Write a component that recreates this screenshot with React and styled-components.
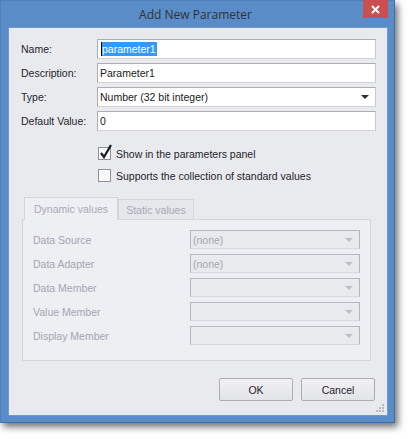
import React from "react";
import styled, { createGlobalStyle } from "styled-components";

const GlobalStyle = createGlobalStyle`
  html, body {
    margin: 0;
    padding: 0;
    background: #ffffff;
  }
  body {
    font-family: "Liberation Sans", Arial, sans-serif;
  }
`;

const Page = styled.div`
  width: 410px;
  height: 439px;
  overflow: hidden;
`;

const Window = styled.div`
  width: 395px;
  height: 423px;
  box-sizing: border-box;
  background: #5a8dc8;
  border: 1px solid #3f6ea6;
  border-left-color: #4f80bb;
  border-top-color: #4f80bb;
  display: flex;
  flex-direction: column;
  box-shadow: 3px 4px 7px rgba(0, 0, 0, 0.55);
`;

const TitleBar = styled.div`
  height: 26px;
  display: flex;
  align-items: center;
  justify-content: center;
  position: relative;
  color: #2e3238;
  font-family: "Open Sans", "Liberation Sans", sans-serif;
  font-size: 12px;
  padding-right: 4px;
`;

const CloseButton = styled.div`
  position: absolute;
  top: -1px;
  right: 6px;
  width: 25px;
  height: 18px;
  background: #c9504f;
  display: flex;
  align-items: center;
  justify-content: center;
`;

const Client = styled.div`
  flex: 1;
  margin: 0 6px 6px 7px;
  background: #e9eaee;
  border: 1px solid #6f9ad0;
  box-sizing: border-box;
  padding: 11px 11px 0 12px;
  display: flex;
  flex-direction: column;
  position: relative;
  font-size: 10.5px;
  color: #1f2228;
`;

const FormGrid = styled.div`
  display: grid;
  grid-template-columns: 76px 1fr;
  row-gap: 4px;
  align-items: center;
`;

const Label = styled.div`
  font-size: 10.5px;
  color: ${p => (p.disabled ? "#a3a5b4" : "#22252b")};
`;

const Field = styled.div`
  height: 20px;
  box-sizing: border-box;
  border: 1px solid #abadb3;
  border-bottom-color: #d0d2d8;
  border-right-color: #c6c8ce;
  background: #ffffff;
  display: flex;
  align-items: center;
  padding-left: 2px;
  padding-right: 6px;
  font-size: 10.5px;
  color: #1a1a1a;
`;

const Selected = styled.span`
  background: #3399ff;
  color: #ffffff;
  padding: 1px 1px 1px 0;
  border-left: 1px solid #000;
  margin-left: 1px;
`;

const FieldText = styled.span`
  flex: 1;
`;

const Arrow = styled.span`
  width: 0;
  height: 0;
  border-left: 4px solid transparent;
  border-right: 4px solid transparent;
  border-top: 4px solid ${p => (p.disabled ? "#bcbec6" : "#2c2f36")};
`;

const Checks = styled.div`
  display: flex;
  flex-direction: column;
  gap: 9px;
  margin: 16px 0 0 77px;
`;

const CheckRow = styled.label`
  display: flex;
  align-items: center;
  gap: 5px;
  font-size: 10.5px;
  color: #22252b;
`;

const Box = styled.span`
  width: 13px;
  height: 13px;
  box-sizing: border-box;
  border: 1px solid #8f9199;
  background: #fafafa;
  position: relative;
`;

const Tick = styled.svg`
  position: absolute;
  left: 0px;
  top: -4px;
`;

const TabGroup = styled.div`
  margin: 14px 5px 0 1px;
  display: flex;
  flex-direction: column;
`;

const TabStrip = styled.div`
  display: flex;
  align-items: flex-end;
  padding-left: 2px;
  height: 23px;
`;

const Tab = styled.div`
  height: ${p => (p.active ? "23px" : "20px")};
  box-sizing: border-box;
  padding: 0 ${p => (p.active ? "9px" : "7px")};
  border: 1px solid #d3d5db;
  border-bottom: none;
  background: ${p => (p.active ? "#eeeff2" : "#e6e7eb")};
  color: #a8aab8;
  font-size: 10.5px;
  display: flex;
  align-items: center;
  margin-bottom: ${p => (p.active ? "-1px" : "0")};
  position: relative;
  z-index: ${p => (p.active ? 1 : 0)};
`;

const Panel = styled.div`
  height: 142px;
  box-sizing: border-box;
  border: 1px solid #d3d5db;
  background: #eeeff2;
  padding: 10px 10px 0 10px;
  display: grid;
  grid-template-columns: 157px 1fr;
  row-gap: 5px;
  align-content: start;
  align-items: center;
`;

const Combo = styled.div`
  height: 19px;
  box-sizing: border-box;
  border: 1px solid #b4b6be;
  border-bottom-color: #d6d8de;
  background: #e9eaee;
  display: flex;
  align-items: center;
  padding: 0 6px 0 2px;
  font-size: 10.5px;
  color: #a3a5b4;
`;

const Footer = styled.div`
  display: flex;
  justify-content: flex-end;
  gap: 8px;
  margin-top: 17px;
  padding-right: 1px;
`;

const Button = styled.button`
  width: 74px;
  height: 23px;
  box-sizing: border-box;
  border: 1px solid #acacb2;
  border-radius: 2px;
  background: linear-gradient(#f1f1f3, #e3e4e8);
  font-family: "Liberation Sans", Arial, sans-serif;
  font-size: 10.5px;
  color: #1f2228;
  padding: 0;
`;

const Grip = styled.svg`
  position: absolute;
  right: 2px;
  bottom: 2px;
`;

const dynamicRows = [
  ["Data Source", "(none)"],
  ["Data Adapter", "(none)"],
  ["Data Member", ""],
  ["Value Member", ""],
  ["Display Member", ""],
];

export default function App() {
  return (
    <Page>
      <GlobalStyle />
      <Window>
        <TitleBar>
          Add New Parameter
          <CloseButton>
            <svg width="9" height="9" viewBox="0 0 9 9">
              <path d="M1 1 L8 8 M8 1 L1 8" stroke="#fff" strokeWidth="2" />
            </svg>
          </CloseButton>
        </TitleBar>
        <Client>
          <FormGrid>
            <Label>Name:</Label>
            <Field>
              <Selected>parameter1</Selected>
            </Field>
            <Label>Description:</Label>
            <Field>
              <FieldText>Parameter1</FieldText>
            </Field>
            <Label>Type:</Label>
            <Field>
              <FieldText>Number (32 bit integer)</FieldText>
              <Arrow />
            </Field>
            <Label>Default Value:</Label>
            <Field>
              <FieldText>0</FieldText>
            </Field>
          </FormGrid>

          <Checks>
            <CheckRow>
              <Box>
                <Tick width="14" height="16" viewBox="0 0 14 16">
                  <path
                    d="M2 9 L5 13 L12 1"
                    fill="none"
                    stroke="#1a1a1a"
                    strokeWidth="2.2"
                  />
                </Tick>
              </Box>
              Show in the parameters panel
            </CheckRow>
            <CheckRow>
              <Box />
              Supports the collection of standard values
            </CheckRow>
          </Checks>

          <TabGroup>
            <TabStrip>
              <Tab active>Dynamic values</Tab>
              <Tab>Static values</Tab>
            </TabStrip>
            <Panel>
              {dynamicRows.map(([name, value]) => (
                <React.Fragment key={name}>
                  <Label disabled>{name}</Label>
                  <Combo>
                    <FieldText>{value}</FieldText>
                    <Arrow disabled />
                  </Combo>
                </React.Fragment>
              ))}
            </Panel>
          </TabGroup>

          <Footer>
            <Button>OK</Button>
            <Button>Cancel</Button>
          </Footer>

          <Grip width="9" height="9" viewBox="0 0 9 9">
            {[
              [6, 0],
              [3, 3],
              [6, 3],
              [0, 6],
              [3, 6],
              [6, 6],
            ].map(([x, y]) => (
              <rect key={`${x}-${y}`} x={x} y={y} width="2" height="2" fill="#b5b7bf" />
            ))}
          </Grip>
        </Client>
      </Window>
    </Page>
  );
}
